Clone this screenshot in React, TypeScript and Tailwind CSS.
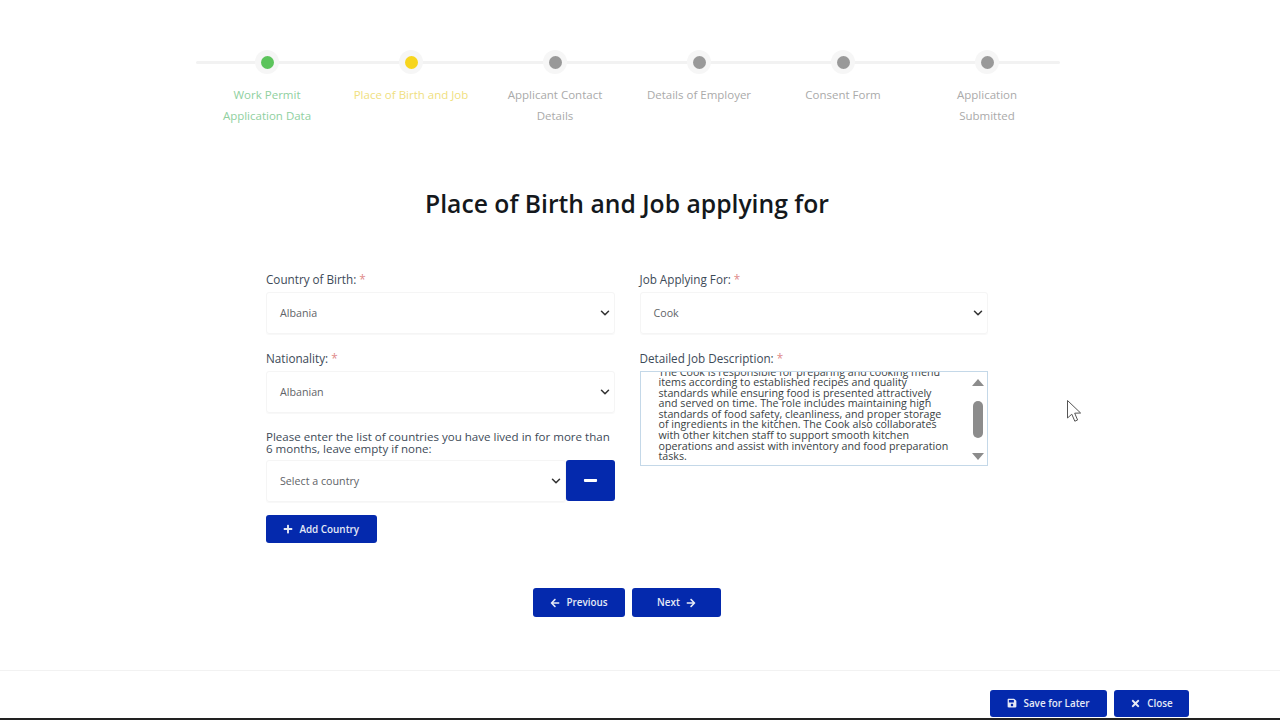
import { ChevronDown } from 'lucide-react'
import { FaArrowLeft, FaArrowRight, FaMinus, FaPlus, FaSave, FaTimes } from 'react-icons/fa'

const steps = [
  { label: ['Work Permit', 'Application Data'], dot: 'bg-[#5cc45c]', text: 'text-[#8fd0a0]' },
  { label: ['Place of Birth and Job'], dot: 'bg-[#f7d51d]', text: 'text-[#f0e080]' },
  { label: ['Applicant Contact', 'Details'], dot: 'bg-[#999999]', text: 'text-[#aaaaaa]' },
  { label: ['Details of Employer'], dot: 'bg-[#999999]', text: 'text-[#aaaaaa]' },
  { label: ['Consent Form'], dot: 'bg-[#999999]', text: 'text-[#aaaaaa]' },
  { label: ['Application', 'Submitted'], dot: 'bg-[#999999]', text: 'text-[#aaaaaa]' },
]

function Label({ text }: { text: string }) {
  return (
    <p className="text-[11.7px] leading-[16px] text-[#3d4a57]">
      {text} <span className="text-[#e08a8a]">*</span>
    </p>
  )
}

function SelectBox({ value, className }: { value: string; className: string }) {
  return (
    <div className={`flex h-[42px] items-center justify-between rounded-[3px] border border-[#f5f5f5] pl-[13px] pr-[2px] shadow-[0_1px_1px_rgba(0,0,0,0.03)] ${className}`}>
      <span className="text-[10.7px] text-[#5f6468]">{value}</span>
      <ChevronDown className="h-[14px] w-[14px] text-[#333333]" strokeWidth={2.6} />
    </div>
  )
}

function BlueButton({ children, className }: { children: React.ReactNode; className: string }) {
  return (
    <button className={`flex items-center justify-center rounded-[3px] bg-[#0429ad] text-[9.9px] font-semibold text-[#e6eaf6] ${className}`}>
      {children}
    </button>
  )
}

export default function App() {
  return (
    <div className="relative flex h-[720px] w-[1280px] flex-col overflow-hidden bg-white font-['Open_Sans','Noto_Sans',sans-serif]">
      {/* Stepper */}
      <div className="relative ml-[195px] mt-[50px] grid w-[864px] grid-cols-6">
        <div className="absolute left-[1px] right-[-1px] top-[10.5px] h-[3px] rounded bg-[#f2f2f2]" />
        {steps.map((step) => (
          <div key={step.label[0]} className="relative flex flex-col items-center">
            <div className="flex h-[24px] w-[24px] items-center justify-center rounded-full bg-[#f6f6f6]">
              <div className={`h-[13px] w-[13px] rounded-full ${step.dot}`} />
            </div>
            <div className={`mt-[11px] text-center text-[11.5px] leading-[20.5px] ${step.text}`}>
              {step.label.map((line) => (
                <div key={line}>{line}</div>
              ))}
            </div>
          </div>
        ))}
      </div>

      <h1 className="ml-[195px] mt-[60px] w-[864px] text-center text-[24.7px] font-semibold leading-[36px] text-[#14181c]">
        Place of Birth and Job applying for
      </h1>

      {/* Form */}
      <div className="ml-[266px] mt-[49px] flex h-[317px] w-[722px] gap-[24.5px]">
        <div className="w-[349px]">
          <Label text="Country of Birth:" />
          <SelectBox value="Albania" className="mt-[5px]" />
          <div className="mt-[16px]">
            <Label text="Nationality:" />
          </div>
          <SelectBox value="Albanian" className="mt-[5px]" />
          <p className="mt-[18px] text-[11.55px] leading-[11.5px] text-[#3d4a57]">
            Please enter the list of countries you have lived in for more than 6 months, leave empty if none:
          </p>
          <div className="mt-[6px] flex">
            <SelectBox value="Select a country" className="w-[300px]" />
            <BlueButton className="h-[41px] w-[49px]">
              <FaMinus className="h-[15px] w-[15px] text-white" />
            </BlueButton>
          </div>
          <BlueButton className="mt-[13px] h-[28px] w-[110.5px] gap-[6px]">
            <FaPlus className="h-[10px] w-[10px]" />
            Add Country
          </BlueButton>
        </div>

        <div className="w-[348.5px]">
          <Label text="Job Applying For:" />
          <SelectBox value="Cook" className="mt-[5px]" />
          <div className="mt-[16px]">
            <Label text="Detailed Job Description:" />
          </div>
          <div className="relative mt-[5px] h-[95px] overflow-hidden border border-[#c4d8e8] pl-[18px] pr-[37.5px]">
            <p className="-mt-[5.5px] text-[10.7px] leading-[10.6px] text-[#3a3f44]">
              The Cook is responsible for preparing and cooking menu items according to established recipes and quality standards while ensuring food is presented attractively and served on time. The role includes maintaining high standards of food safety, cleanliness, and proper storage of ingredients in the kitchen. The Cook also collaborates with other kitchen staff to support smooth kitchen operations and assist with inventory and food preparation tasks.
            </p>
            {/* Scrollbar */}
            <div className="absolute bottom-0 right-[2px] top-0 w-[14px]">
              <div className="absolute left-[1px] top-[7px] h-0 w-0 border-x-[6px] border-b-[7px] border-x-transparent border-b-[#8c8c8c]" />
              <div className="absolute left-[2px] top-[29px] h-[37px] w-[10px] rounded-[5px] bg-[#8c8c8c]" />
              <div className="absolute bottom-[5px] left-[1px] h-0 w-0 border-x-[6px] border-t-[7px] border-x-transparent border-t-[#8c8c8c]" />
            </div>
          </div>
        </div>
      </div>

      {/* Previous / Next */}
      <div className="ml-[533px] flex gap-[7px]">
        <BlueButton className="h-[29px] w-[92px] gap-[6px]">
          <FaArrowLeft className="h-[10px] w-[10px]" />
          Previous
        </BlueButton>
        <BlueButton className="h-[29px] w-[89px] gap-[6px]">
          Next
          <FaArrowRight className="h-[10px] w-[10px]" />
        </BlueButton>
      </div>

      {/* Footer */}
      <div className="mt-[53px] flex h-[48px] justify-end gap-[7px] border-t border-[#f2f2f2] pr-[91px] pt-[18.5px]">
        <BlueButton className="h-[27.5px] w-[117px] gap-[6px]">
          <FaSave className="h-[10px] w-[10px]" />
          Save for Later
        </BlueButton>
        <BlueButton className="h-[27.5px] w-[75px] gap-[6px]">
          <FaTimes className="h-[11px] w-[11px]" />
          Close
        </BlueButton>
      </div>
      <div className="absolute bottom-0 left-0 right-0 h-[2px] bg-[#222222]" />

      {/* Mouse pointer */}
      <svg className="absolute left-[1066px] top-[399px]" width="17" height="24" viewBox="0 0 17 24" fill="white" stroke="#555555" strokeWidth="1">
        <path d="M1.5 1.5 L1.5 19 L5.8 15.2 L8.8 22.2 L11.6 21 L8.7 14.2 L14.6 14 Z" />
      </svg>
    </div>
  )
}
